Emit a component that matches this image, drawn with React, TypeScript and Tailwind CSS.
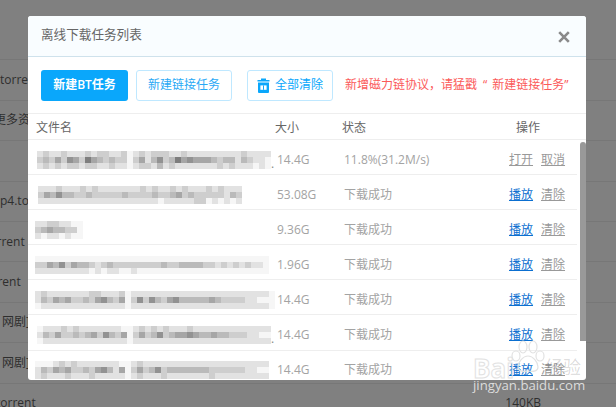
const font = { fontFamily: '"Open Sans", "Noto Sans CJK SC", sans-serif' };

const BACKDROP = [
  { text: '', offset: 'ml-0' },
  { text: 'torrent', offset: 'ml-0' },
  { text: '更多资源', offset: 'ml-[-6px]' },
  { text: '', offset: 'ml-0' },
  { text: 'p4.torrent', offset: 'ml-0' },
  { text: 'torrent', offset: 'ml-[-15px]' },
  { text: 'torrent', offset: 'ml-[-19px]' },
  { text: '网剧]', offset: 'ml-[2px]' },
  { text: '网剧]', offset: 'ml-[2px]' },
  { text: 'torrent', offset: 'ml-[-4px]' },
];

const LONG_A = [
  '121121112122112012122211211111111121111',
  '232425426432322024135236454443233132110',
  '121212212211211012213121111111212111010',
];
const LONG_B = [
  '1112111212111111121211212111212111',
  '2435332232222232222322342322222132',
  '1111111111111111111101111122010101',
];
const SHORT = ['11221100', '23433220', '10110100'];
const LONG_C = [
  '000000000000000000000000000000000000000',
  '224352433212322222222322333322121212110',
  '111111111010110010000000000000000000000',
];
const LONG_D = [
  '1211111112211120111111111111111111111110',
  '1324342232453240252532453333343222211000',
  '0111111111111110111111111111111111111110',
];
const LONG_E = [
  '011121211111110012121211121111111111111',
  '132422323425324024235234454334332221100',
  '011111111111111011111111111111111111111',
];
const LONG_F = [
  '000121211111110012111111111111111111111',
  '132434223245314024235233333332222221100',
  '121112111211111012111211111112111111111',
];

const ROWS = [
  { blur: LONG_A, left: 'ml-[9px]', dot: true, size: '14.4G', status: '11.8%(31.2M/s)', a: '打开', b: '取消', active: true },
  { blur: LONG_B, left: 'ml-[10px]', dot: false, size: '53.08G', status: '下载成功', a: '播放', b: '清除', active: false },
  { blur: SHORT, left: 'ml-[7px]', dot: false, size: '9.36G', status: '下载成功', a: '播放', b: '清除', active: false },
  { blur: LONG_C, left: 'ml-[7px]', dot: false, size: '1.96G', status: '下载成功', a: '播放', b: '清除', active: false },
  { blur: LONG_D, left: 'ml-[7px]', dot: false, size: '14.4G', status: '下载成功', a: '播放', b: '清除', active: false },
  { blur: LONG_E, left: 'ml-[9px]', dot: true, size: '14.4G', status: '下载成功', a: '播放', b: '清除', active: false },
  { blur: LONG_F, left: 'ml-[7px]', dot: false, size: '14.4G', status: '下载成功', a: '播放', b: '清除', active: false },
];

function Mosaic({ rows }: { rows: string[] }) {
  return (
    <div className="flex flex-col">
      {rows.map((row, i) => (
        <div key={i} className="flex h-[6px]">
          {row.split('').map((c, j) => {
            const v = 246 - Number(c) * 20;
            return <span key={j} className="h-[6px] w-[6px]" style={{ backgroundColor: `rgb(${v}, ${v}, ${v})` }} />;
          })}
        </div>
      ))}
    </div>
  );
}

function TrashIcon() {
  return (
    <svg width="13" height="15" viewBox="0 0 13 15" aria-hidden="true">
      <path d="M4 0.5h5v1.5h3.5v1.6H0.5V2H4z" fill="#0aa7fb" />
      <path d="M1 4.6h11V14a1 1 0 0 1-1 1H2a1 1 0 0 1-1-1z" fill="#0aa7fb" />
      <rect x="3.4" y="7.4" width="6.2" height="4.4" fill="#fff" />
      <rect x="6" y="7.4" width="1" height="4.4" fill="#0aa7fb" />
    </svg>
  );
}

function CloseIcon() {
  return (
    <svg width="12" height="12" viewBox="0 0 12 12" aria-hidden="true">
      <path d="M1.2 1.2l9.6 9.6M10.8 1.2l-9.6 9.6" stroke="#8a8a8a" strokeWidth="2.6" fill="none" />
    </svg>
  );
}

function Watermark() {
  return (
    <div className="pointer-events-none absolute left-[473px] top-[340px] h-[54px] w-[112px]">
      <svg className="absolute left-[37px] top-0" width="36" height="34" viewBox="0 0 36 34" fill="none" stroke="#e2e2e2" strokeWidth="1.2" aria-hidden="true">
        <ellipse cx="6" cy="16" rx="4" ry="5" />
        <ellipse cx="13" cy="7" rx="4" ry="6" />
        <ellipse cx="23" cy="7" rx="4" ry="6" />
        <ellipse cx="30" cy="16" rx="4" ry="5" />
        <path d="M18 16c-5 0-10 6-10 11 0 4 4 5 10 4 6 1 10 0 10-4 0-5-5-11-10-11z" />
      </svg>
      <span className="absolute left-0 top-[15px] text-[26px] font-bold leading-[26px] text-transparent [-webkit-text-stroke:1px_#e2e2e2]" style={font}>
        Bai
      </span>
      <span className="absolute left-[72px] top-[16px] text-[18px] leading-[22px] text-black/15" style={font}>
        经验
      </span>
      <span className="absolute left-0 top-[37px] whitespace-nowrap text-[13.2px] leading-[16px] text-[#dcdcdc]" style={font}>
        jingyan.baidu.com
      </span>
    </div>
  );
}

export default function App() {
  return (
    <div className="relative h-[407px] w-[616px] overflow-hidden bg-[#808080] text-[12px]" style={font}>
      <div className="flex flex-col pt-[20px]">
        {BACKDROP.map((row, i) => (
          <div key={i} className="flex h-[40.4px] shrink-0 items-center justify-between border-b border-[#777] text-[12px] text-[#2e2e2e]">
            <span className={`whitespace-nowrap ${row.offset}`}>{row.text}</span>
            {i === 9 && <span className="mr-[75px]">140KB</span>}
          </div>
        ))}
      </div>

      <div className="absolute left-[28px] top-[16px] flex h-[364px] w-[558px] flex-col overflow-hidden rounded-[3px] bg-white">
        <div className="flex h-[41px] shrink-0 items-center justify-between border-b border-[#cfe2ec] bg-[#f9fdff] pb-[2px] pl-[13px] pr-[16px]">
          <span className="text-[12.6px] text-[#666]">离线下载任务列表</span>
          <span className="mt-[3px] flex"><CloseIcon /></span>
        </div>

        <div className="flex h-[56px] shrink-0 items-center pl-[13px]">
          <button className="h-[31px] w-[87px] rounded-[3px] bg-[#0aa7fb] text-center font-semibold text-white">新建BT任务</button>
          <button className="ml-[8px] h-[31px] w-[96px] rounded-[3px] border border-[#bfe8ff] text-center text-[#29a9f5]">新建链接任务</button>
          <button className="ml-[15px] flex h-[31px] w-[86px] items-center justify-center gap-[5px] rounded-[3px] border border-[#bfe8ff] text-[#0aa7fb]">
            <TrashIcon />
            全部清除
          </button>
          <span className="ml-[12px] flex whitespace-nowrap text-[#fb5a5a]">
            新增磁力链协议，请猛戳
            <span className="ml-[6px] mr-[5px]">“</span>
            新建链接任务”
          </span>
        </div>

        <div className="flex h-[27px] shrink-0 items-center border-y border-[#eee] pt-[2px] text-[#666]">
          <span className="ml-[8px] w-[239px]">文件名</span>
          <span className="w-[67px]">大小</span>
          <span className="w-[174px]">状态</span>
          <span>操作</span>
        </div>

        <div className="flex min-h-0 flex-1">
          <div className="w-[549px] shrink-0">
            {ROWS.map((row, i) => (
              <div key={i} className="flex h-[35.1px] items-center border-b border-[#eee] pt-[5px] text-[#a3a3a3]">
                <div className="flex w-[249px] shrink-0 items-center overflow-hidden">
                  <div className={`${row.left} shrink-0`}><Mosaic rows={row.blur} /></div>
                  {row.dot && <span className="mt-[8px] text-[#888]">.</span>}
                </div>
                <span className="w-[67px] shrink-0">{row.size}</span>
                <span className="w-[165px] shrink-0">{row.status}</span>
                <span className={`underline ${row.active ? 'text-[#999]' : 'text-[#0b6fd0]'}`}>{row.a}</span>
                <span className="ml-[8px] text-[#999] underline">{row.b}</span>
              </div>
            ))}
          </div>
          <div className="ml-[3px] mt-[2px] h-[199px] w-[6px] rounded-t-[3px] bg-[#999]" />
        </div>
      </div>

      <Watermark />
    </div>
  );
}
